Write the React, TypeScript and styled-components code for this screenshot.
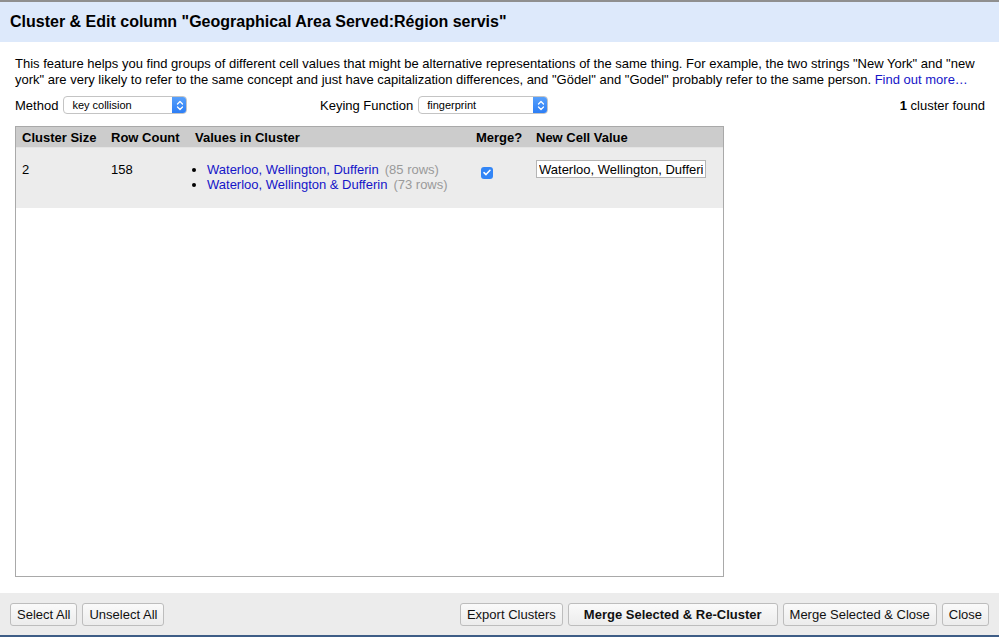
import React, {useState} from 'react';
import styled, {createGlobalStyle} from 'styled-components';

const GlobalStyle = createGlobalStyle`
  html, body {
    margin: 0;
    padding: 0;
    background: #fff;
  }
  body {
    font-family: "Liberation Sans", Arial, Helvetica, sans-serif;
    font-size: 13px;
    color: #000;
  }
`;

const Dialog = styled.div`
  height: 637px;
  display: flex;
  flex-direction: column;
  box-sizing: border-box;
  border-top: 2px solid #8f8f8f;
  border-bottom: 2px solid #3e5d86;
`;

const Header = styled.div`
  height: 40px;
  flex: none;
  background: #dde9fb;
  display: flex;
  align-items: center;
  padding: 0 10px;
  font-size: 16px;
  font-weight: bold;
`;

const Body = styled.div`
  flex: 1;
  display: flex;
  flex-direction: column;
  padding: 14px 15px 16px;
  min-height: 0;
`;

const Intro = styled.p`
  margin: 0;
  line-height: 16px;
`;

const Link = styled.a`
  color: #1515c8;
  text-decoration: none;
`;

const Controls = styled.div`
  display: flex;
  align-items: center;
  height: 18px;
  margin: 8px 0 12px;
`;

const Field = styled.label<{$width: number}>`
  display: flex;
  align-items: center;
  gap: 5px;
  width: ${(p) => p.$width}px;
`;

const Select = styled.div<{$width: number}>`
  width: ${(p) => p.$width}px;
  height: 18px;
  box-sizing: border-box;
  border: 1px solid #c4c4c4;
  border-radius: 4px;
  background: #fff;
  display: flex;
  align-items: center;
  font-size: 11px;
  padding-left: 8px;
  overflow: hidden;
`;

const SelectText = styled.span`
  flex: 1;
`;

const Arrow = styled.span`
  width: 15px;
  height: 18px;
  margin: -1px -1px -1px 0;
  border-radius: 0 4px 4px 0;
  background: linear-gradient(#5aa2fb, #2a7cf5);
  display: flex;
  align-items: center;
  justify-content: center;
`;

const Found = styled.div`
  margin-left: auto;
  margin-right: -1px;
`;

const Table = styled.div`
  flex: 1;
  width: 709px;
  box-sizing: border-box;
  border: 1px solid #a9a9a9;
  background: #fff;
`;

const Row = styled.div<{$head?: boolean}>`
  display: grid;
  grid-template-columns: 89px 84px 281px 60px 1fr;
  background: ${(p) => (p.$head ? '#cccccc' : '#ececec')};
  height: ${(p) => (p.$head ? 20 : 60)}px;
  align-items: ${(p) => (p.$head ? 'center' : 'start')};
  font-weight: ${(p) => (p.$head ? 'bold' : 'normal')};
  border-bottom: ${(p) => (p.$head ? '1px solid #e4e4e4' : 'none')};
`;

const Cell = styled.div<{$top?: number}>`
  padding-left: 6px;
  padding-top: ${(p) => p.$top ?? 0}px;
  white-space: nowrap;
`;

const Values = styled.ul`
  margin: 0;
  padding: 0 0 0 12px;
  list-style: disc;
  line-height: 15px;
`;

const ValueLink = styled.span`
  color: #1515c8;
`;

const Rows = styled.span`
  color: #9a9a9a;
  margin-left: 6px;
`;

const Check = styled.span`
  display: inline-flex;
  width: 12px;
  height: 12px;
  border-radius: 3px;
  background: #3285f6;
  align-items: center;
  justify-content: center;
  margin-left: 5px;
`;

const ValueInput = styled.input`
  width: 170px;
  height: 18px;
  box-sizing: border-box;
  border: 1px solid #b5b5b5;
  padding: 0 2px;
  font-family: inherit;
  font-size: 13px;
  outline: none;
`;

const Footer = styled.div`
  height: 42px;
  flex: none;
  background: #ececec;
  display: flex;
  align-items: center;
  padding: 0 10px;
  gap: 5px;
`;

const Button = styled.button<{$primary?: boolean}>`
  height: 23px;
  box-sizing: border-box;
  padding: 0 ${(p) => (p.$primary ? 15 : 6)}px;
  border: 1px solid #bdbdbd;
  border-radius: 3px;
  background: linear-gradient(#fafafa, #ececec);
  font-family: inherit;
  font-size: 13px;
  font-weight: ${(p) => (p.$primary ? 'bold' : 'normal')};
  color: #111;
`;

const Spacer = styled.div`
  flex: 1;
`;

const Chevrons = () => (
  <svg width="8" height="11" viewBox="0 0 8 11">
    <path d="M1.5 4 L4 1.5 L6.5 4 M1.5 7 L4 9.5 L6.5 7" stroke="#fff" strokeWidth="1.3" fill="none" strokeLinecap="round" strokeLinejoin="round" />
  </svg>
);

const App = () => {
  const [cellValue, setCellValue] = useState('Waterloo, Wellington, Dufferin');

  return (
    <>
      <GlobalStyle />
      <Dialog>
        <Header>Cluster &amp; Edit column "Geographical Area Served:Région servis"</Header>
        <Body>
          <Intro>
            This feature helps you find groups of different cell values that might be alternative
            representations of the same thing. For example, the two strings "New York" and "new
            york" are very likely to refer to the same concept and just have capitalization
            differences, and "Gödel" and "Godel" probably refer to the same person.{' '}
            <Link href="#">Find out more…</Link>
          </Intro>
          <Controls>
            <Field $width={305}>
              Method
              <Select $width={124}>
                <SelectText>key collision</SelectText>
                <Arrow>
                  <Chevrons />
                </Arrow>
              </Select>
            </Field>
            <Field $width={300}>
              Keying Function
              <Select $width={130}>
                <SelectText>fingerprint</SelectText>
                <Arrow>
                  <Chevrons />
                </Arrow>
              </Select>
            </Field>
            <Found>
              <b>1</b> cluster found
            </Found>
          </Controls>
          <Table>
            <Row $head>
              <Cell>Cluster Size</Cell>
              <Cell>Row Count</Cell>
              <Cell>Values in Cluster</Cell>
              <Cell>Merge?</Cell>
              <Cell>New Cell Value</Cell>
            </Row>
            <Row>
              <Cell $top={14}>2</Cell>
              <Cell $top={14}>158</Cell>
              <Cell $top={14}>
                <Values>
                  <li>
                    <ValueLink>Waterloo, Wellington, Dufferin</ValueLink>
                    <Rows>(85 rows)</Rows>
                  </li>
                  <li>
                    <ValueLink>Waterloo, Wellington &amp; Dufferin</ValueLink>
                    <Rows>(73 rows)</Rows>
                  </li>
                </Values>
              </Cell>
              <Cell $top={16}>
                <Check>
                  <svg width="8" height="7" viewBox="0 0 8 7">
                    <path d="M1 3.6 L3 5.6 L7 1.2" stroke="#fff" strokeWidth="1.5" fill="none" strokeLinecap="round" strokeLinejoin="round" />
                  </svg>
                </Check>
              </Cell>
              <Cell $top={12}>
                <ValueInput value={cellValue} onChange={(e) => setCellValue(e.target.value)} />
              </Cell>
            </Row>
          </Table>
        </Body>
        <Footer>
          <Button>Select All</Button>
          <Button>Unselect All</Button>
          <Spacer />
          <Button>Export Clusters</Button>
          <Button $primary>Merge Selected &amp; Re-Cluster</Button>
          <Button>Merge Selected &amp; Close</Button>
          <Button>Close</Button>
        </Footer>
      </Dialog>
    </>
  );
};

export default App;
